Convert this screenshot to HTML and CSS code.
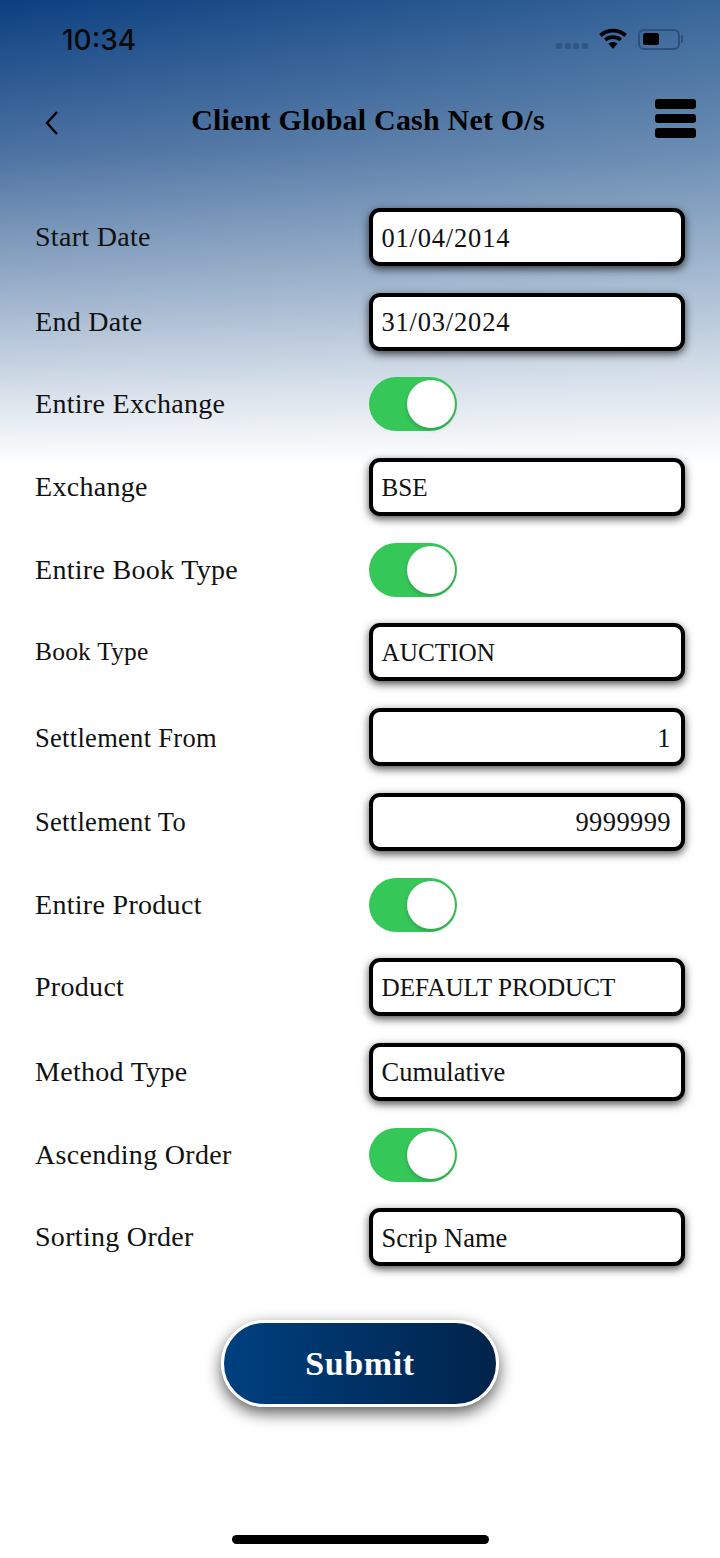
FILE: index.html
```html
<!DOCTYPE html>
<html lang="en">
  <head>
    <meta charset="UTF-8" />
    <meta name="viewport" content="width=device-width, initial-scale=1.0" />
    <title>Client Global Cash Net O/s</title>
    <link rel="stylesheet" href="styles.css">
  </head>
  <body>
    <div class="screen">
      <div class="status-bar">
        <span class="time">10:34</span>
        <div class="status-icons">
          <div class="signal"><i></i><i></i><i></i><i></i></div>
          <svg class="wifi" width="28" height="22" viewBox="0 0 28 22">
            <path d="M1.5 7.5 C8.5 1 19.5 1 26.5 7.5" fill="none" stroke="#000" stroke-width="3.8"/>
            <path d="M6.3 12 C10.5 8.2 17.5 8.2 21.7 12" fill="none" stroke="#000" stroke-width="3.6"/>
            <path d="M9.4 15.6 C12 13.4 16 13.4 18.6 15.6 L14 21 Z" fill="#000"/>
          </svg>
          <div class="battery"><div class="battery-fill"></div></div>
          <div class="battery-cap"></div>
        </div>
      </div>

      <div class="nav-bar">
        <svg class="back" width="16" height="26" viewBox="0 0 16 26">
          <path d="M13 2 L3 13 L13 24" fill="none" stroke="#000" stroke-width="2.4"/>
        </svg>
        <h1>Client Global Cash Net O/s</h1>
        <div class="menu"><i></i><i></i><i></i></div>
      </div>

      <div class="form">
        <div class="row"><label>Start Date</label><div class="field date">01/04/2014</div></div>
        <div class="row"><label>End Date</label><div class="field date">31/03/2024</div></div>
        <div class="row toggle-row"><label>Entire Exchange</label><div class="toggle"><span class="knob"></span></div></div>
        <div class="row"><label>Exchange</label><div class="field caps">BSE</div></div>
        <div class="row toggle-row"><label>Entire Book Type</label><div class="toggle"><span class="knob"></span></div></div>
        <div class="row"><label class="small">Book Type</label><div class="field caps">AUCTION</div></div>
        <div class="row"><label class="medium">Settlement From</label><div class="field right">1</div></div>
        <div class="row"><label class="medium">Settlement To</label><div class="field right">9999999</div></div>
        <div class="row toggle-row"><label>Entire Product</label><div class="toggle"><span class="knob"></span></div></div>
        <div class="row"><label>Product</label><div class="field caps">DEFAULT PRODUCT</div></div>
        <div class="row"><label>Method Type</label><div class="field">Cumulative</div></div>
        <div class="row toggle-row"><label>Ascending Order</label><div class="toggle"><span class="knob"></span></div></div>
        <div class="row"><label>Sorting Order</label><div class="field">Scrip Name</div></div>
      </div>

      <div class="submit-wrap">
        <button class="submit">Submit</button>
      </div>

      <div class="home-wrap"><div class="home-bar"></div></div>
    </div>
  </body>
</html>
```

FILE: styles.css
```css
* {
  margin: 0;
  padding: 0;
  box-sizing: border-box;
}

body {
  background-color: white;
  font-family: "Liberation Serif", serif;
  color: #000;
}

.screen {
  width: 720px;
  height: 1558px;
  overflow: hidden;
  display: flex;
  flex-direction: column;
  background:
    linear-gradient(to bottom,
      rgba(255, 255, 255, 0) 0,
      rgba(255, 255, 255, 0.25) 150px,
      rgba(255, 255, 255, 0.6) 300px,
      rgba(255, 255, 255, 0.85) 400px,
      #fff 465px) no-repeat,
    linear-gradient(105deg, #0c3f80, #3f6c9d) 0 0 / 720px 465px no-repeat,
    white;
}

.status-bar {
  height: 80px;
  padding: 24px 37px 0 62px;
  display: flex;
  justify-content: space-between;
  align-items: flex-start;
}

.time {
  font-family: Inter, sans-serif;
  font-size: 28px;
  font-weight: 500;
  line-height: 32px;
  color: #0a0a0a;
}

.status-icons {
  display: flex;
  align-items: center;
  margin-top: 4px;
}

.signal {
  display: flex;
  gap: 2.6px;
  margin-top: 14px;
  margin-right: 11px;
}

.signal i {
  width: 6px;
  height: 6px;
  border-radius: 1.5px;
  background-color: #2f5686;
}

.wifi {
  margin-right: 11px;
}

.battery {
  width: 42px;
  height: 21px;
  border: 2px solid #2c4f7c;
  border-radius: 6px;
  padding: 2.5px;
}

.battery-fill {
  width: 16px;
  height: 100%;
  background-color: #000;
  border-radius: 2.5px;
}

.battery-cap {
  width: 2px;
  height: 8px;
  margin-left: 1px;
  background-color: #2c4f7c;
  border-radius: 0 2px 2px 0;
}

.nav-bar {
  height: 128px;
  padding: 9px 24px 0 44px;
  display: flex;
  justify-content: space-between;
  align-items: flex-start;
  position: relative;
}

.back {
  margin-top: 21px;
}

h1 {
  position: absolute;
  left: 16px;
  right: 0;
  top: 20px;
  text-align: center;
  font-size: 30px;
  line-height: 40px;
  font-weight: bold;
  letter-spacing: 0.2px;
}

.menu {
  display: flex;
  flex-direction: column;
  gap: 5px;
  margin-top: 10px;
}

.menu i {
  display: block;
  width: 41px;
  height: 9.5px;
  background-color: #000;
  border-radius: 3px;
}

.form {
  display: flex;
  flex-direction: column;
  gap: 26.7px;
  padding: 0 35px;
}

.row {
  display: flex;
  align-items: center;
  height: 58px;
}

.toggle-row {
  height: 54px;
}

label {
  width: 334px;
  font-size: 28px;
  letter-spacing: 0.3px;
  color: #111;
}

label.small {
  font-size: 25.5px;
  letter-spacing: 0.2px;
}

label.medium {
  font-size: 26.5px;
  padding-top: 2px;
}

.field {
  width: 316px;
  height: 58px;
  padding: 2px 10px 0 8.5px;
  display: flex;
  align-items: center;
  font-size: 26.5px;
  color: #111;
  background-color: white;
  border: 4px solid #000;
  border-radius: 11px;
  box-shadow: 0 3px 9px rgba(0, 0, 0, 0.7);
}

.field.date {
  letter-spacing: 0.8px;
}

.field.caps {
  font-size: 25.2px;
}

.field.right {
  justify-content: flex-end;
  letter-spacing: 0.4px;
}

.toggle {
  width: 88px;
  height: 54px;
  background-color: #36c759;
  border-radius: 27px;
  position: relative;
}

.knob {
  position: absolute;
  top: 3px;
  right: 2px;
  width: 48px;
  height: 48px;
  border-radius: 50%;
  background-color: white;
  box-shadow: 0 2px 4px rgba(0, 0, 0, 0.2);
}

.submit-wrap {
  display: flex;
  justify-content: center;
  margin-top: 54px;
}

.submit {
  width: 278px;
  height: 87px;
  border: 3.5px solid white;
  border-radius: 44px;
  background: linear-gradient(90deg, #004080, #00234a);
  color: white;
  font-family: "Liberation Serif", serif;
  font-size: 34px;
  letter-spacing: 0.6px;
  font-weight: bold;
  box-shadow: 0 6px 16px rgba(0, 0, 0, 0.65);
}

.home-wrap {
  display: flex;
  justify-content: center;
  margin-top: 128px;
}

.home-bar {
  width: 257px;
  height: 9px;
  border-radius: 5px;
  background-color: #000;
}
```
